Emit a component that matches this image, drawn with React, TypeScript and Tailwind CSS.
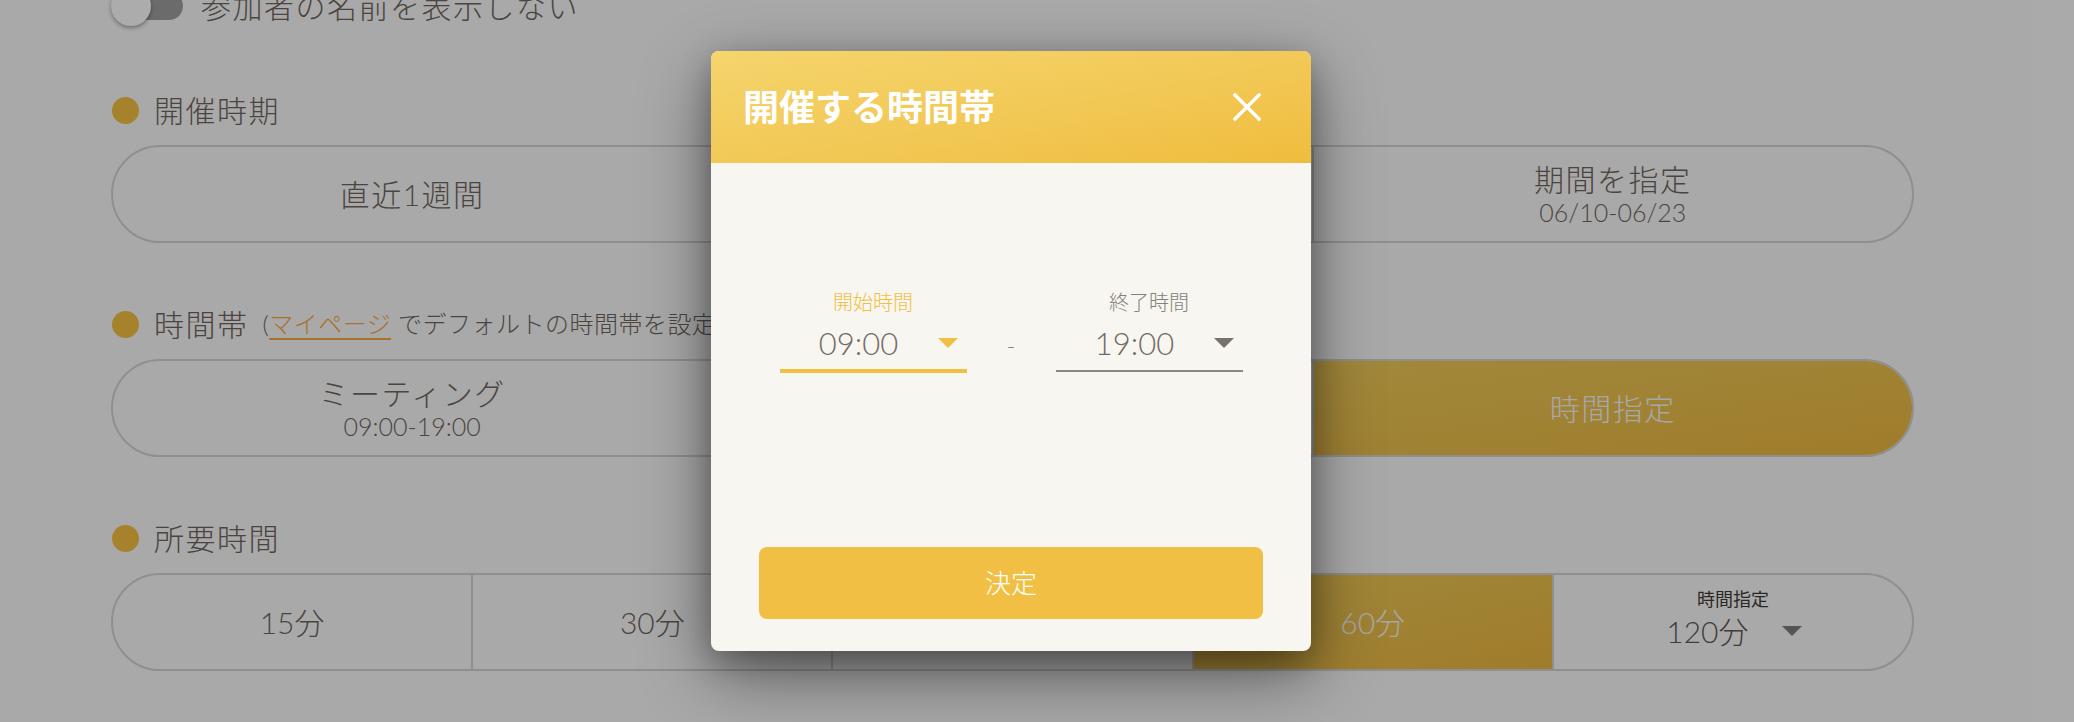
import React from "react";

function Dot() {
  return <span className="ml-[1px] block h-[27px] w-[27px] shrink-0 rounded-full bg-[#eebb3f]" />;
}

function Caret({ color }: { color: string }) {
  return (
    <svg width="20" height="10" viewBox="0 0 20 10" className="shrink-0">
      <polygon points="0,0 20,0 10,10" fill={color} />
    </svg>
  );
}

export default function App() {
  return (
    <div className="relative h-[722px] w-[2074px] overflow-hidden bg-[#f3f3f3] font-['Lato','Noto_Sans_CJK_JP',sans-serif] text-[#6c635c]">
      {/* underlying page */}
      <div className="-mt-[14px] flex flex-col pl-[111px]">
        {/* toggle row */}
        <div className="flex h-[40px] items-center">
          <div className="relative h-[40px] w-[72px] shrink-0">
            <div className="absolute left-[14px] top-[6px] h-[28px] w-[58px] rounded-full bg-[#9a9a9a]" />
            <div className="absolute left-0 top-0 h-[40px] w-[40px] rounded-full bg-[#f6f6f6] shadow-[0_2px_4px_rgba(0,0,0,0.35)]" />
          </div>
          <span className="ml-[18px] text-[30px] font-light leading-[40px] tracking-[0.05em]">参加者の名前を表示しない</span>
        </div>

        {/* 開催時期 */}
        <div className="mt-[69px] flex h-[30px] items-center">
          <Dot />
          <span className="ml-[15px] text-[30px] font-light leading-[30px] tracking-[0.05em]">開催時期</span>
        </div>
        <div className="mt-[20px] flex h-[98px] w-[1803px] overflow-hidden rounded-full border-2 border-[#cdcdcd]">
          <div className="flex flex-1 items-center justify-center text-[30px] font-light tracking-[0.05em]">直近1週間</div>
          <div className="flex flex-1 items-center justify-center border-l-2 border-[#cdcdcd] text-[30px] font-light tracking-[0.05em]">直近2週間</div>
          <div className="flex flex-1 flex-col items-center justify-center border-l-2 border-[#cdcdcd] font-light">
            <span className="text-[30px] leading-[36px] tracking-[0.05em]">期間を指定</span>
            <span className="text-[25px] leading-[30px]">06/10-06/23</span>
          </div>
        </div>

        {/* 時間帯 */}
        <div className="mt-[66px] flex h-[30px] items-center">
          <Dot />
          <span className="ml-[15px] text-[30px] font-light leading-[30px] tracking-[0.05em]">時間帯</span>
          <span className="ml-[14px] text-[24px] font-light leading-[30px] tracking-[0.02em]">
            (<span className="text-[#f0a342] underline decoration-2 underline-offset-[5px]">マイページ</span> でデフォルトの時間帯を設定)
          </span>
        </div>
        <div className="mt-[20px] flex h-[98px] w-[1803px] overflow-hidden rounded-full border-2 border-[#cdcdcd]">
          <div className="flex flex-1 flex-col items-center justify-center font-light">
            <span className="text-[30px] leading-[36px] tracking-[0.05em]">ミーティング</span>
            <span className="text-[25px] leading-[30px]">09:00-19:00</span>
          </div>
          <div className="flex flex-1 flex-col items-center justify-center border-l-2 border-[#cdcdcd] font-light">
            <span className="text-[30px] leading-[36px] tracking-[0.05em]">終日</span>
            <span className="text-[25px] leading-[30px]">00:00-24:00</span>
          </div>
          <div className="flex flex-1 items-center justify-center border-l-2 border-[#cdcdcd] bg-linear-to-br from-[#e8c456] to-[#e4b23f] text-[30px] font-light tracking-[0.05em] text-[#f0f0f0]">
            時間指定
          </div>
        </div>

        {/* 所要時間 */}
        <div className="mt-[66px] flex h-[30px] items-center">
          <Dot />
          <span className="ml-[15px] text-[30px] font-light leading-[30px] tracking-[0.05em]">所要時間</span>
        </div>
        <div className="mt-[20px] flex h-[98px] w-[1803px] overflow-hidden rounded-full border-2 border-[#cdcdcd]">
          <div className="flex flex-1 items-center justify-center text-[30px] font-light">15分</div>
          <div className="flex flex-1 items-center justify-center border-l-2 border-[#cdcdcd] text-[30px] font-light">30分</div>
          <div className="flex flex-1 items-center justify-center border-l-2 border-[#cdcdcd] text-[30px] font-light">45分</div>
          <div className="flex flex-1 items-center justify-center border-l-2 border-[#cdcdcd] bg-linear-to-br from-[#e8c456] to-[#e4b23f] text-[30px] font-light text-[#f0f0f0]">
            60分
          </div>
          <div className="flex flex-1 flex-col items-center justify-center border-l-2 border-[#cdcdcd] pb-[8px]">
            <span className="text-[18px] leading-[24px] text-[#3f3935]">時間指定</span>
            <div className="mt-[2px] flex items-center gap-[33px] pl-[2px]">
              <span className="text-[30px] font-light leading-[36px] text-[#5e5651]">120分</span>
              <Caret color="#7a7a7a" />
            </div>
          </div>
        </div>
      </div>

      {/* backdrop */}
      <div className="absolute inset-0 bg-black/30" />

      {/* dialog */}
      <div className="absolute left-[711px] top-[51px] flex h-[600px] w-[600px] flex-col overflow-hidden rounded-[8px] bg-[#f8f6f0] shadow-[0_24px_70px_rgba(0,0,0,0.45),0_10px_30px_rgba(0,0,0,0.25)]">
        <div className="flex h-[112px] shrink-0 items-center justify-between bg-linear-to-br from-[#f5d56d] to-[#efbd3d] pl-[32px] pr-[50px]">
          <h2 className="text-[36px] font-bold leading-[40px] text-white">開催する時間帯</h2>
          <svg width="28" height="28" viewBox="0 0 28 28">
            <path d="M2 2 L26 26 M26 2 L2 26" stroke="#ffffff" strokeWidth="3.4" strokeLinecap="square" />
          </svg>
        </div>
        <div className="flex flex-1 flex-col px-[48px] pb-[32px]">
          <div className="mt-[127px] flex items-start justify-center">
            {/* start */}
            <div className="flex w-[187px] flex-col items-center">
              <span className="text-[20px] font-light leading-[24px] text-[#f0bf43]">開始時間</span>
              <div className="mt-[11px] flex h-[48px] w-full items-start border-b-4 border-[#f0bf43] pr-[9px]">
                <span className="flex-1 text-center text-[31px] font-light leading-[36px] text-[#726a64]">09:00</span>
                <div className="mt-[13px]">
                  <Caret color="#f0bf43" />
                </div>
              </div>
            </div>
            {/* dash */}
            <div className="flex w-[89px] justify-center pt-[44px]">
              <span className="text-[24px] font-light leading-[24px] text-[#8a8580]">-</span>
            </div>
            {/* end */}
            <div className="flex w-[187px] flex-col items-center">
              <span className="text-[20px] font-light leading-[24px] text-[#85807b]">終了時間</span>
              <div className="mt-[11px] flex h-[47px] w-full items-start border-b-2 border-[#8d8a85] pr-[9px]">
                <span className="flex-1 text-center text-[31px] font-light leading-[36px] text-[#726a64]">19:00</span>
                <div className="mt-[13px]">
                  <Caret color="#77716c" />
                </div>
              </div>
            </div>
          </div>
          <button className="mt-auto flex h-[72px] w-full items-center justify-center rounded-[8px] bg-[#f0bf43] text-[26px] font-light text-white">
            決定
          </button>
        </div>
      </div>
    </div>
  );
}
